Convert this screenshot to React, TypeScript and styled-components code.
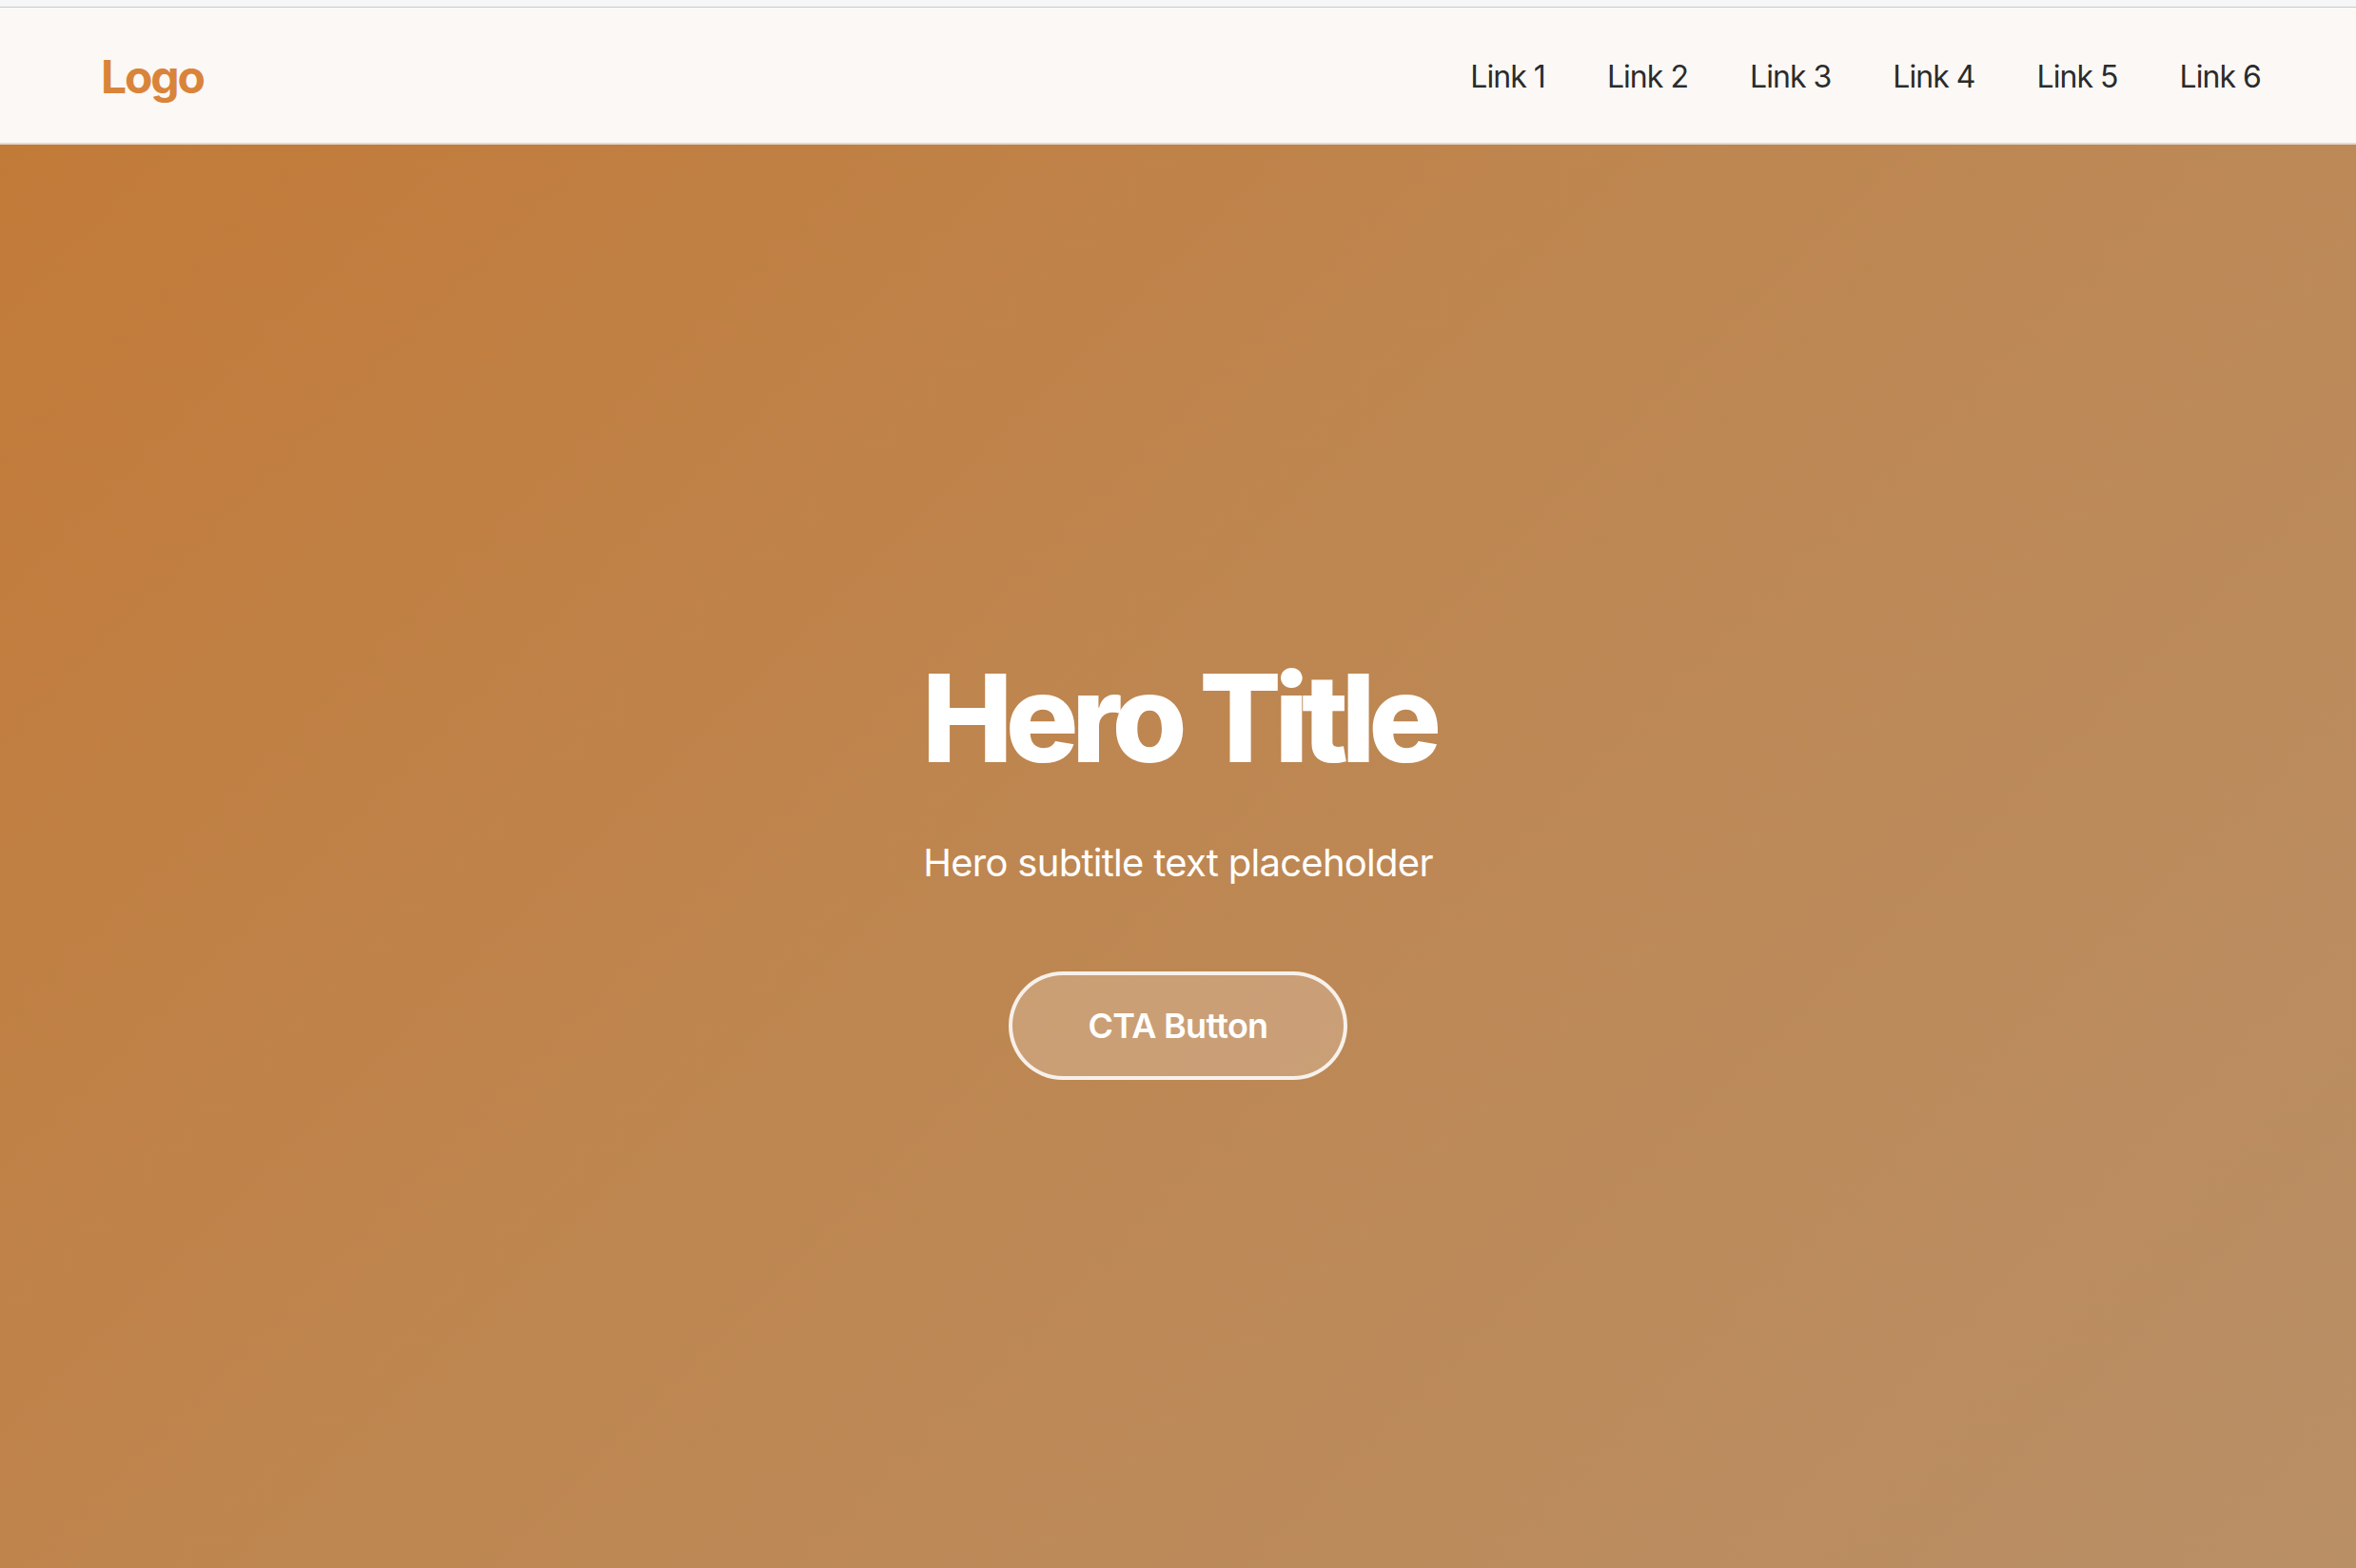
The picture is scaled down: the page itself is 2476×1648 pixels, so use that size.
import React from "react";
import styled, { createGlobalStyle } from "styled-components";

const GlobalStyle = createGlobalStyle`
  * { box-sizing: border-box; }
  html, body { margin: 0; padding: 0; }
  body {
    font-family: Inter, "Noto Sans", "Liberation Sans", sans-serif;
    background: #f5f6f8;
  }
`;

const Page = styled.div`
  display: flex;
  flex-direction: column;
  min-height: 1648px;
`;

const TopStrip = styled.div`
  height: 8px;
  background: #f5f6f8;
  border-bottom: 1px solid #c9cacd;
`;

const NavBar = styled.header`
  height: 144px;
  display: flex;
  align-items: center;
  justify-content: space-between;
  padding: 2px 100px 0 106px;
  background: #fbf8f5;
  border-bottom: 2px solid #e2dad2;
`;

const Logo = styled.a`
  font-size: 48px;
  font-weight: 700;
  letter-spacing: -0.045em;
  color: #d9843b;
  text-decoration: none;
`;

const NavLinks = styled.nav`
  display: flex;
  gap: 65px;
`;

const NavLink = styled.a`
  font-size: 32px;
  font-weight: 400;
  color: #2b2b2b;
  text-decoration: none;
  letter-spacing: -0.03em;
`;

const Hero = styled.section`
  flex: 1;
  display: flex;
  flex-direction: column;
  align-items: center;
  justify-content: center;
  padding-top: 18px;
  background: linear-gradient(135deg, #c27a38 0%, #be8650 45%, #b98f66 100%);
  color: #ffffff;
  text-align: center;
`;

const Title = styled.h1`
  margin: 0;
  font-size: 128px;
  line-height: 141px;
  font-weight: 800;
  letter-spacing: -0.06em;
`;

const Subtitle = styled.p`
  margin: 52px 0 0;
  font-size: 40px;
  line-height: 60px;
  font-weight: 400;
  letter-spacing: -0.018em;
`;

const CTAButton = styled.button`
  margin-top: 84px;
  height: 114px;
  padding: 0 80px;
  border-radius: 999px;
  border: 4px solid rgba(255, 255, 255, 0.85);
  background: rgba(255, 255, 255, 0.2);
  color: #ffffff;
  font-family: inherit;
  font-size: 36px;
  font-weight: 600;
  letter-spacing: -0.02em;
  cursor: pointer;
`;

const links = ["Link 1", "Link 2", "Link 3", "Link 4", "Link 5", "Link 6"];

export default function App() {
  return (
    <>
      <GlobalStyle />
      <Page>
        <TopStrip />
        <NavBar>
          <Logo href="#">Logo</Logo>
          <NavLinks>
            {links.map((l) => (
              <NavLink key={l} href="#">
                {l}
              </NavLink>
            ))}
          </NavLinks>
        </NavBar>
        <Hero>
          <Title>Hero Title</Title>
          <Subtitle>Hero subtitle text placeholder</Subtitle>
          <CTAButton>CTA Button</CTAButton>
        </Hero>
      </Page>
    </>
  );
}
